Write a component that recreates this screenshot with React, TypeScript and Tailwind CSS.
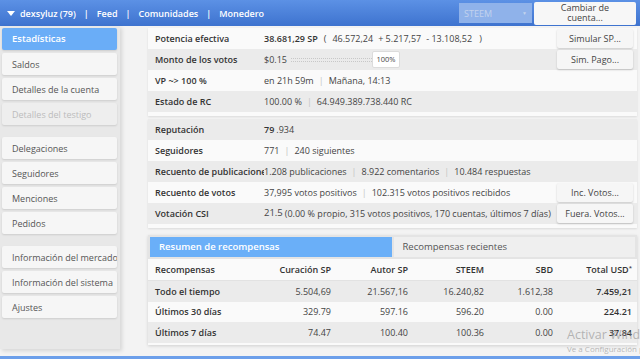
const sideGroups = [
  [
    { label: "Estadísticas", active: true },
    { label: "Saldos" },
    { label: "Detalles de la cuenta" },
    { label: "Detalles del testigo", disabled: true },
  ],
  [
    { label: "Delegaciones" },
    { label: "Seguidores" },
    { label: "Menciones" },
    { label: "Pedidos" },
  ],
  [
    { label: "Información del mercado" },
    { label: "Información del sistema" },
    { label: "Ajustes" },
  ],
];

const rewards = [
  { label: "Todo el tiempo", cur: "5.504,69", autor: "21.567,16", steem: "16.240,82", sbd: "1.612,38", usd: "7.459,21", gray: true },
  { label: "Últimos 30 días", cur: "329.79", autor: "597.16", steem: "596.20", sbd: "0.00", usd: "224.21", gray: false },
  { label: "Últimos 7 días", cur: "74.47", autor: "100.40", steem: "100.36", sbd: "0.00", usd: "37.84", gray: true },
];

function Sep() {
  return <span className="mx-[5px] text-[#c4c4c4]">|</span>;
}

function Btn({ children }: { children: React.ReactNode }) {
  return (
    <button
      type="button"
      className="w-[76px] h-[19px] bg-[#f6f6f6] rounded-[2px] shadow-[0_1px_2px_rgba(0,0,0,0.2)] text-[#444] text-[9px]">
      {children}
    </button>
  );
}

function Row({
  label,
  gray,
  children,
  action,
}: {
  label: string;
  gray?: boolean;
  children: React.ReactNode;
  action?: React.ReactNode;
}) {
  return (
    <div className={`flex items-center h-[21px] ${gray ? "bg-[#ebebeb]" : "bg-[#fafafa]"}`}>
      <div className="w-[116px] shrink-0 pl-[7px] pr-[2px] leading-[14px] font-semibold text-[#333] whitespace-nowrap overflow-hidden">
        {label}
      </div>
      <div className="flex-1 flex items-center text-[#444] whitespace-nowrap">{children}</div>
      {action && <div className="pr-[4px]">{action}</div>}
    </div>
  );
}

export default function App() {
  return (
    <div
      className="relative w-[640px] h-[359px] overflow-hidden bg-[#f3f3f3] text-[9px] leading-none"
      style={{ fontFamily: '"Open Sans", "Noto Sans", sans-serif' }}>
      {/* top bar */}
      <div className="h-[26px] flex items-center bg-gradient-to-b from-[#5c91e5] to-[#3e73cf] text-white font-semibold">
        <div className="flex items-center pl-[7px]">
          <span className="w-0 h-0 border-l-[4px] border-r-[4px] border-t-[5px] border-l-transparent border-r-transparent border-t-white mr-[5px]" />
          <span>dexsyluz (79)</span>
          <span className="mx-[8px]">|</span>
          <span>Feed</span>
          <span className="mx-[8px]">|</span>
          <span>Comunidades</span>
          <span className="mx-[8px]">|</span>
          <span>Monedero</span>
        </div>
        <div className="ml-auto flex items-center gap-[2px] pr-[4px]">
          <div className="w-[73px] h-[20px] bg-[#8fb2ea] flex items-center justify-between px-[5px] text-[#c3d3ee] font-normal">
            <span>STEEM</span>
            <span className="text-[5px]">▼</span>
          </div>
          <button
            type="button"
            className="w-[102px] h-[23px] bg-[#f7f7f7] rounded-[2px] text-[#444] font-normal text-[9px] leading-[10.5px]">
            Cambiar de
            <br />
            cuenta...
          </button>
        </div>
      </div>

      <div className="flex">
        {/* sidebar */}
        <div className="w-[120px] h-[323px] bg-[#e8e8e8] shadow-[2px_2px_4px_rgba(0,0,0,0.12)] pl-[2px] pr-[3px] pt-[2px] flex flex-col gap-[12px]">
          {sideGroups.map((g, i) => (
            <div key={i} className="flex flex-col gap-[3px]">
              {g.map((it) => (
                <div
                  key={it.label}
                  className={`h-[22px] flex items-center pl-[10px] rounded-[2px] whitespace-nowrap overflow-hidden shadow-[0_1px_2px_rgba(0,0,0,0.12)] ${
                    it.active
                      ? "bg-[#6aadf7] text-white font-semibold text-[9.5px]"
                      : it.disabled
                      ? "bg-[#eeeeee] text-[#bcbcbc]"
                      : "bg-[#f6f6f6] text-[#555]"
                  }`}>
                  {it.label}
                </div>
              ))}
            </div>
          ))}
        </div>

        {/* main */}
        <div className="flex-1 pl-[28px] pr-[3px] pt-[2px] flex flex-col">
          <div className="bg-[#fafafa] pb-[4px] shadow-[0_1px_2px_rgba(0,0,0,0.1)]">
            <Row label="Potencia efectiva" action={<Btn>Simular SP...</Btn>}>
              <span className="font-semibold text-[#333]">38.681,29 SP</span>
              <span className="ml-[6px]">(</span>
              <span className="ml-[6px]">46.572,24</span>
              <span className="ml-[5px]">+ 5.217,57</span>
              <span className="ml-[5px]">- 13.108,52</span>
              <span className="ml-[7px]">)</span>
            </Row>
            <Row label="Monto de los votos" gray action={<Btn>Sim. Pago...</Btn>}>
              <span>$0.15</span>
              <div className="ml-[4px] w-[81px] h-[4px] border-y border-dotted border-[#c8c8c8]" />
              <div className="w-[28px] h-[17px] bg-white border border-[#dcdcdc] rounded-[2px] flex items-center justify-center text-[7.5px] text-[#444]">
                100%
              </div>
            </Row>
            <Row label="VP ~> 100 %">
              <span>en 21h 59m</span>
              <Sep />
              <span>Mañana, 14:13</span>
            </Row>
            <Row label="Estado de RC" gray>
              <span>100.00 %</span>
              <Sep />
              <span>64.949.389.738.440 RC</span>
            </Row>
          </div>

          <div className="mt-[3px] bg-[#fafafa] pb-[4px] shadow-[0_1px_2px_rgba(0,0,0,0.1)]">
            <Row label="Reputación" gray>
              <span className="font-semibold text-[#333]">79</span>
              <span className="ml-[2px]">.934</span>
            </Row>
            <Row label="Seguidores">
              <span>771</span>
              <Sep />
              <span>240 siguientes</span>
            </Row>
            <Row label="Recuento de publicaciones" gray>
              <span>1.208 publicaciones</span>
              <Sep />
              <span>8.922 comentarios</span>
              <Sep />
              <span>10.484 respuestas</span>
            </Row>
            <Row label="Recuento de votos" action={<Btn>Inc. Votos...</Btn>}>
              <span>37,995 votos positivos</span>
              <Sep />
              <span>102.315 votos positivos recibidos</span>
            </Row>
            <Row label="Votación CSI" gray action={<Btn>Fuera. Votos...</Btn>}>
              <span className="relative top-[-1px] text-[9.5px]">21.5</span>
              <span className="ml-[2px]">(0.00 % propio, 315 votos positivos, 170 cuentas, últimos 7 días)</span>
            </Row>
          </div>

          <div className="mt-[7px] bg-[#fafafa] pb-[2px] shadow-[0_1px_3px_rgba(0,0,0,0.15)]">
            <div className="flex gap-[2px] bg-[#e4e4e4] p-[2px]">
              <div className="flex-1 h-[20px] flex items-center pl-[9px] bg-[#6aaff8] text-white font-semibold text-[9.5px]">
                Resumen de recompensas
              </div>
              <div className="flex-1 h-[20px] flex items-center pl-[9px] bg-[#efefef] text-[#555] text-[9.5px]">
                Recompensas recientes
              </div>
            </div>
            <div className="grid grid-cols-[110px_78px_77px_76px_69px_79px] h-[22px] items-center font-semibold text-[#333] border-b border-[#e2e2e2]">
              <span className="pl-[7px]">Recompensas</span>
              <span className="text-right pr-[5px]">Curación SP</span>
              <span className="text-right pr-[5px]">Autor SP</span>
              <span className="text-right pr-[5px]">STEEM</span>
              <span className="text-right pr-[5px]">SBD</span>
              <span className="text-right pr-[5px]">
                Total USD<sup className="text-[6px]">*</sup>
              </span>
            </div>
            {rewards.map((r) => (
              <div
                key={r.label}
                className={`grid grid-cols-[110px_78px_77px_76px_69px_79px] h-[20.5px] items-center text-[#444] ${
                  r.gray ? "bg-[#ebebeb]" : "bg-[#fafafa]"
                }`}>
                <span className="pl-[7px] font-semibold text-[#333]">{r.label}</span>
                <span className="text-right pr-[5px]">{r.cur}</span>
                <span className="text-right pr-[5px]">{r.autor}</span>
                <span className="text-right pr-[5px]">{r.steem}</span>
                <span className="text-right pr-[5px]">{r.sbd}</span>
                <span className="text-right pr-[5px] font-semibold text-[#333]">{r.usd}</span>
              </div>
            ))}
          </div>
        </div>
      </div>

      {/* bottom bar edge */}
      <div className="absolute left-0 right-0 bottom-0 h-[3px] bg-[#6c9fea]" />

      {/* windows watermark */}
      <div className="absolute left-[567px] top-[329px] text-[#9a9a9a]/70 whitespace-nowrap pointer-events-none">
        <div className="text-[12.5px]">Activar Windows</div>
        <div className="text-[8px] mt-[3px]">Ve a Configuración para activar Windows.</div>
      </div>
    </div>
  );
}
